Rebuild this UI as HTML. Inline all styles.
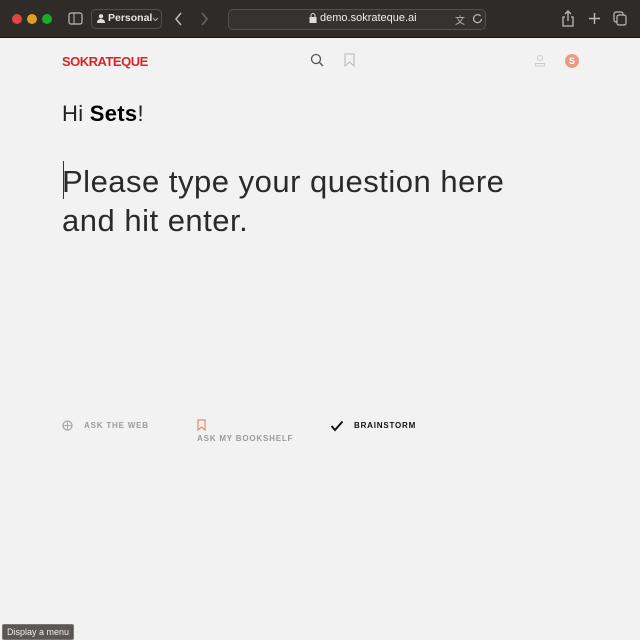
<!DOCTYPE html>
<html><head><meta charset="utf-8"><style>
*{margin:0;padding:0;box-sizing:border-box}
body{width:640px;height:640px;background:#f2f2f2;font-family:"Liberation Sans",sans-serif;position:relative;overflow:hidden}
.bar{position:absolute;left:0;top:0;width:640px;height:38px;background:#2f2b29;border-bottom:1px solid #1b1918}
.dot{position:absolute;top:14px;width:10px;height:10px;border-radius:50%}
.ab{position:absolute}
.pill{position:absolute;border:1px solid #55504d;border-radius:5px}
.t{color:#ddd;font-size:11px}
.lbl{position:absolute;font-size:8px;font-weight:bold;letter-spacing:.8px;color:#9a9a9a}
</style></head><body>
<div class="bar">
 <div class="dot" style="left:12px;background:#e0443e"></div>
 <div class="dot" style="left:27px;background:#dea123"></div>
 <div class="dot" style="left:42px;background:#1aab29"></div>
 <svg class="ab" style="left:68px;top:12px" width="16" height="14"><rect x="1" y="1" width="13" height="11" rx="2" fill="none" stroke="#bbb" stroke-width="1.2"/><line x1="6" y1="1" x2="6" y2="12" stroke="#bbb"/></svg>
 <div class="pill" style="left:91px;top:9px;width:71px;height:20px"></div>
 <svg class="ab" style="left:97px;top:14px" width="8" height="9"><circle cx="4" cy="2.3" r="2.2" fill="#ddd"/><path d="M0 9 Q0 5 4 5 Q8 5 8 9 Z" fill="#ddd"/></svg>
 <div class="ab t" style="left:108px;top:12px;font-weight:bold;color:#e6e6e6;font-size:10.5px">Personal</div>
 <svg class="ab" style="left:152px;top:17px" width="7" height="5"><path d="M1 1 L3.5 3.5 L6 1" fill="none" stroke="#aaa"/></svg>
 <svg class="ab" style="left:174px;top:12px" width="10" height="14"><path d="M7 1 L2 7 L7 13" fill="none" stroke="#bbb" stroke-width="1.5"/></svg>
 <svg class="ab" style="left:199px;top:12px" width="10" height="14"><path d="M3 1 L8 7 L3 13" fill="none" stroke="#666" stroke-width="1.5"/></svg>
 <div class="pill" style="left:228px;top:9px;width:258px;height:21px;background:#363230"></div>
 <svg class="ab" style="left:309px;top:13px" width="8" height="11"><rect x="0.5" y="4" width="7" height="6" fill="#ddd"/><path d="M2 4 V2.5 a2 2 0 0 1 4 0 V4" fill="none" stroke="#ddd"/></svg>
 <div class="ab t" style="left:320px;top:12px;color:#eee">demo.sokrateque.ai</div>
 <div class="ab t" style="left:455px;top:12px;font-size:10px;color:#bbb">&#x6587;</div>
 <svg class="ab" style="left:472px;top:13px" width="11" height="11"><path d="M8.5 3 A4 4 0 1 0 9.5 6" fill="none" stroke="#bbb" stroke-width="1.2"/></svg>
 <svg class="ab" style="left:561px;top:10px" width="14" height="18"><path d="M7 1 V11 M4 4 L7 1 L10 4 M4 7 H2 V16 H12 V7 H10" fill="none" stroke="#bbb" stroke-width="1.3"/></svg>
 <svg class="ab" style="left:588px;top:12px" width="13" height="13"><path d="M6.5 1 V12 M1 6.5 H12" stroke="#bbb" stroke-width="1.4"/></svg>
 <svg class="ab" style="left:613px;top:11px" width="15" height="16"><rect x="1" y="1" width="9" height="10" rx="2" fill="none" stroke="#bbb" stroke-width="1.2"/><rect x="4" y="4" width="9" height="10" rx="2" fill="#2f2b29" stroke="#bbb" stroke-width="1.2"/></svg>
</div>

<div class="ab" style="left:62px;top:54px;font-size:13px;font-weight:bold;color:#d9252a;letter-spacing:-0.5px">SOKRATEQUE</div>
<svg class="ab" style="left:310px;top:53px" width="14" height="14"><circle cx="6" cy="6" r="4.5" fill="none" stroke="#555" stroke-width="1.3"/><line x1="9.3" y1="9.3" x2="13" y2="13" stroke="#555" stroke-width="1.4"/></svg>
<svg class="ab" style="left:344px;top:53px" width="11" height="14"><path d="M1 1 H10 V13 L5.5 9 L1 13 Z" fill="none" stroke="#bbb" stroke-width="1.1"/></svg>
<svg class="ab" style="left:534px;top:54px" width="12" height="13"><circle cx="6" cy="4" r="2.5" fill="none" stroke="#ccc"/><path d="M1.5 12 V9.5 H10.5 V12 Z" fill="none" stroke="#ccc"/></svg>
<div class="ab" style="left:565px;top:54px;width:14px;height:14px;border-radius:50%;background:#ea9a83;color:#fff;font-size:9px;text-align:center;line-height:14px;font-weight:bold">S</div>

<div class="ab" style="left:62px;top:101px;font-size:22px;color:#222;letter-spacing:0.3px">Hi <b style="font-weight:700;color:#000">Sets</b>!</div>
<div class="ab" style="left:63px;top:161px;width:1px;height:38px;background:#333"></div>
<div class="ab" style="left:62px;top:162px;font-size:31px;line-height:39px;color:#2a2a2a;letter-spacing:0.5px;width:560px">Please type your question here<br>and hit enter.</div>

<svg class="ab" style="left:62px;top:420px" width="11" height="11"><circle cx="5.5" cy="5.5" r="4.5" fill="none" stroke="#aaa" stroke-width="1.3"/><path d="M1 5.5 H10 M5.5 1 V10" stroke="#aaa" stroke-width="1"/></svg>
<div class="lbl" style="left:84px;top:421px">ASK THE WEB</div>
<svg class="ab" style="left:197px;top:419px" width="9" height="12"><path d="M1 1 H8 V11 L4.5 8 L1 11 Z" fill="none" stroke="#ea8a6c" stroke-width="1.2"/></svg>
<div class="lbl" style="left:197px;top:434px">ASK MY BOOKSHELF</div>
<svg class="ab" style="left:330px;top:420px" width="14" height="12"><path d="M1.5 6 L5 10 L12.5 1.5" fill="none" stroke="#111" stroke-width="2"/></svg>
<div class="lbl" style="left:354px;top:421px;color:#111">BRAINSTORM</div>

<div class="ab" style="left:2px;top:624px;background:#5a5755;color:#f0f0f0;font-size:9px;padding:2px 4px;border-radius:2px;border:1px solid #777">Display a menu</div>
</body></html>
